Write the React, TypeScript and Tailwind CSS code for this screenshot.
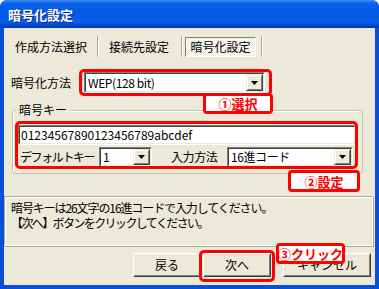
import React from "react";

function Tri() {
  return (
    <svg width="7" height="4" viewBox="0 0 7 4">
      <path d="M0 0H7L3.5 4Z" fill="#000" />
    </svg>
  );
}

function Sunken({ className, children }: { className: string; children: React.ReactNode }) {
  return (
    <div className={`${className} flex border border-t-[#808080] border-l-[#808080] border-b-white border-r-white`}>
      <div className="flex-1 flex min-w-0 border border-t-[#404040] border-l-[#404040] border-b-[#ece9d8] border-r-[#ece9d8] bg-white">
        {children}
      </div>
    </div>
  );
}

function Combo({ value, className }: { value: string; className: string }) {
  return (
    <Sunken className={className}>
      <div className="flex-1 flex items-center pl-[2px] text-[12px] leading-none text-black whitespace-nowrap overflow-hidden tracking-[-0.4px]">{value}</div>
      <div className="w-[17px] flex border border-t-[#ece9d8] border-l-[#ece9d8] border-b-[#404040] border-r-[#404040]">
        <div className="flex-1 flex items-center justify-center bg-[#ece9d8] border border-t-white border-l-white border-b-[#808080] border-r-[#808080]">
          <Tri />
        </div>
      </div>
    </Sunken>
  );
}

function Btn({ label, className }: { label: string; className: string }) {
  return (
    <div className={`${className} h-[24px] flex border border-t-white border-l-white border-b-[#404040] border-r-[#404040]`}>
      <div className="flex-1 flex items-center justify-center bg-[#ece9d8] border border-t-[#ece9d8] border-l-[#ece9d8] border-b-[#808080] border-r-[#808080] text-[12px] text-black">
        {label}
      </div>
    </div>
  );
}

function Sep() {
  return (
    <div className="flex h-[21px]">
      <div className="w-px bg-[#aca899]" />
      <div className="w-px bg-white" />
    </div>
  );
}

function Tag({ text, className }: { text: string; className: string }) {
  return (
    <div className={`${className} absolute flex items-center justify-center bg-white border-[3px] border-[#ff0000] rounded-[4px] text-[13px] font-bold text-[#ff0000] leading-none whitespace-nowrap`}>
      {text}
    </div>
  );
}

export default function App() {
  return (
    <div className="w-[379px] h-[289px] bg-white font-['Noto_Sans_CJK_JP','Noto_Sans',sans-serif] text-black">
      <div className="w-full h-full flex flex-col rounded-t-[7px] bg-[#0a4fd8] overflow-hidden">
        <div className="h-[28px] shrink-0 flex items-center pl-[8px] bg-[linear-gradient(180deg,#3d8ef5_0%,#0d62ea_12%,#0058e6_45%,#0a5ee9_78%,#0047cf_92%,#0037b0_100%)]">
          <span className="text-white text-[13px] font-bold leading-none [text-shadow:1px_1px_0_#0a2a8a]">暗号化設定</span>
        </div>
        <div className="flex-1 mx-[4px] mb-[4px] bg-[#ece9d8] relative flex flex-col text-[12px]">
          {/* tabs */}
          <div className="flex items-center h-[21px] mt-[8px]">
            <div className="w-[82px] ml-[6px] text-center leading-none">作成方法選択</div>
            <div className="ml-[5px]"><Sep /></div>
            <div className="w-[80px] text-center leading-none">接続先設定</div>
            <div className="ml-[2px]"><Sep /></div>
            <div className="ml-[2px] w-[71px] h-[20px] flex items-center justify-center leading-none border border-t-[#808080] border-l-[#808080] border-b-white border-r-white bg-[repeating-conic-gradient(#ffffff_0%_25%,#ece9d8_0%_50%)] bg-[length:2px_2px]">
              暗号化設定
            </div>
            <div className="ml-[5px]"><Sep /></div>
          </div>

          {/* method row */}
          <div className="flex items-center mt-[15px] pl-[7px]">
            <div className="w-[73px] leading-none">暗号化方法</div>
            <Combo value="WEP(128 bit)" className="w-[181px] h-[21px]" />
          </div>

          {/* group */}
          <div className="relative mt-[17px] ml-[8px] w-[351px] h-[64px] border border-[#c5c2b2] rounded-[3px] shadow-[inset_1px_1px_0_#fff] pl-[5px] pt-[14px] flex flex-col">
            <div className="absolute left-[4px] top-[-8px] px-[2px] bg-[#ece9d8] leading-none text-[12px] pt-[1px]">暗号キー</div>
            <Sunken className="w-[338px] h-[20px]">
              <div className="flex-1 flex items-center pl-[1px] text-[12px] leading-none">01234567890123456789abcdef</div>
            </Sunken>
            <div className="flex items-center mt-[2px] h-[20px]">
              <div className="w-[81px] pl-[2px] leading-none whitespace-nowrap tracking-[-1.4px]">デフォルトキー</div>
              <Combo value="1" className="w-[53px] h-[20px]" />
              <div className="ml-[19px] w-[56px] leading-none tracking-[-0.4px]">入力方法</div>
              <Combo value="16進コード" className="w-[126px] h-[20px]" />
            </div>
          </div>

          {/* info */}
          <div className="mt-[22px] w-[369px] h-[50px] border border-t-[#aca899] border-l-[#aca899] border-b-white border-r-white shadow-[inset_1px_1px_0_#fff,1px_1px_0_#aca899] pl-[6px] pt-[3px] text-[12px] leading-[15px] whitespace-nowrap">
            <div className="tracking-[-1.1px]">暗号キーは26文字の16進コードで入力してください。</div>
            <div className="tracking-[-1.6px]">【次へ】ボタンをクリックしてください。</div>
          </div>

          {/* buttons */}
          <div className="flex mt-[7px] pl-[129px]">
            <Btn label="戻る" className="w-[68px]" />
            <Btn label="次へ" className="w-[68px] ml-[2px]" />
            <Btn label="キャンセル" className="w-[88px] ml-[12px]" />
          </div>

          {/* annotations */}
          <div className="absolute left-[75px] top-[41px] w-[193px] h-[27px] border-[3px] border-[#ff0000] rounded-[5px]" />
          <Tag text="①選択" className="left-[199px] top-[65px] w-[70px] h-[21px]" />
          <div className="absolute left-[11px] top-[93px] w-[343px] h-[48px] border-[3px] border-[#ff0000] rounded-[5px]" />
          <Tag text="②設定" className="left-[284px] top-[142px] w-[72px] h-[22px]" />
          <div className="absolute left-[195px] top-[222px] w-[76px] h-[32px] border-[3px] border-[#ff0000] rounded-[5px]" />
          <Tag text="③クリック" className="left-[272px] top-[215px] w-[69px] h-[21px]" />
        </div>
      </div>
    </div>
  );
}
